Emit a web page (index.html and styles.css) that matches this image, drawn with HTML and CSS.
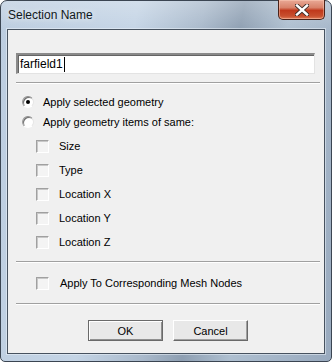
FILE: index.html
```html
<!DOCTYPE html>
<html lang="en">
<head>
    <meta charset="UTF-8">
    <title>Selection Name</title>
    <link rel="stylesheet" href="styles.css">
</head>
<body>
    <div class="window">
        <div class="titlebar">
            <span class="title">Selection Name</span>
            <button class="close" type="button">
                <svg width="14" height="12" viewBox="0 0 14 12">
                    <path d="M2 1.5 L12 10.5 M12 1.5 L2 10.5" stroke="#3a2a26" stroke-width="4.2" stroke-linecap="square" fill="none"/>
                    <path d="M2 1.5 L12 10.5 M12 1.5 L2 10.5" stroke="#ffffff" stroke-width="2.4" stroke-linecap="square" fill="none"/>
                </svg>
            </button>
        </div>

        <div class="client">
            <div class="field"><span class="value">farfield1</span><span class="caret"></span></div>

            <div class="sep"></div>

            <div class="options">
                <div class="row radio-row"><span class="radio checked"></span>Apply selected geometry</div>
                <div class="row radio-row"><span class="radio"></span>Apply geometry items of same:</div>
                <div class="checks">
                    <div class="row check-row"><span class="check"></span>Size</div>
                    <div class="row check-row"><span class="check"></span>Type</div>
                    <div class="row check-row"><span class="check"></span>Location X</div>
                    <div class="row check-row"><span class="check"></span>Location Y</div>
                    <div class="row check-row"><span class="check"></span>Location Z</div>
                </div>
            </div>

            <div class="sep sep-mid"></div>

            <div class="row check-row apply-row"><span class="check"></span>Apply To Corresponding Mesh Nodes</div>

            <div class="sep sep-low"></div>

            <div class="buttons">
                <button class="btn btn-default" type="button">OK</button>
                <button class="btn" type="button">Cancel</button>
            </div>
        </div>
    </div>
</body>
</html>
```

FILE: styles.css
```css
* {
    margin: 0;
    padding: 0;
    box-sizing: border-box;
}

body {
    width: 332px;
    height: 362px;
    overflow: hidden;
    background: #ffffff;
    font-family: "Liberation Sans", Arial, sans-serif;
    font-size: 11px;
    color: #000;
}

/* window frame */
.window {
    width: 332px;
    height: 362px;
    display: flex;
    flex-direction: column;
    border: 1px solid #3b4552;
    border-radius: 7px 7px 5px 5px;
    background:
        linear-gradient(to bottom, rgba(255, 255, 255, 0.25), rgba(255, 255, 255, 0) 30px),
        linear-gradient(100deg, #bccde0 0%, #c4d4e5 35%, #a9b9cb 52%, #8e9fb2 62%, #aebfd0 74%, #a3b4c7 88%, #98a9bd 100%);
}

.titlebar {
    height: 28px;
    flex: none;
    display: flex;
    justify-content: space-between;
    align-items: flex-start;
    padding-left: 7px;
    padding-right: 6px;
}

.title {
    margin-top: 7px;
    font-size: 12px;
    line-height: 14px;
    color: #101820;
    text-shadow: 0 0 6px rgba(255, 255, 255, 0.9);
}

.close {
    width: 47px;
    height: 20px;
    margin-top: -1px;
    display: flex;
    align-items: center;
    justify-content: center;
    border: 1px solid #4a2219;
    border-top: none;
    border-radius: 0 0 5px 5px;
    background: linear-gradient(to bottom, #e9a996 0%, #d8826a 40%, #c0391c 55%, #c8502f 85%, #e07c58 100%);
    box-shadow: inset 0 0 0 1px rgba(255, 210, 190, 0.45);
}

/* client area */
.client {
    flex: 1;
    margin: 0 6px 7px 6px;
    border: 1px solid #47525f;
    box-shadow: 0 0 0 1px rgba(235, 242, 249, 0.55);
    background: #f0f0f0;
    padding: 23px 4px 0 8px;
}

.field {
    width: 299px;
    height: 21px;
    display: flex;
    align-items: center;
    padding-left: 2px;
    background: #fff;
    border-top: 2px solid #8a8a8a;
    border-left: 2px solid #8a8a8a;
    border-right: 1px solid #e3e3e3;
    border-bottom: 1px solid #e3e3e3;
    box-shadow: inset 1px 1px 0 #646464;
    font-size: 12px;
}

.caret {
    width: 1px;
    height: 15px;
    margin-left: 1px;
    background: #000;
}

.sep {
    height: 2px;
    margin-top: 8px;
    border-top: 1px solid #a0a0a0;
    border-bottom: 1px solid #ffffff;
}

.sep-mid {
    margin-top: 7px;
}

.options {
    margin-top: 8px;
}

.row {
    display: flex;
    align-items: center;
}

.radio-row {
    height: 20px;
    padding-left: 6px;
}

.radio {
    width: 12px;
    height: 12px;
    margin-right: 9px;
    border-radius: 50%;
    border: 1px solid;
    border-color: #8c8c8c #e6e6e6 #ffffff #9c9c9c;
    background: radial-gradient(circle at 60% 60%, #ffffff 45%, #e8e8e8 100%);
    box-shadow: inset 1px 1px 0 #6e6e6e;
    display: flex;
    align-items: center;
    justify-content: center;
}

.radio.checked::after {
    content: "";
    width: 4px;
    height: 4px;
    border-radius: 50%;
    background: #000;
}

.checks {
    margin-top: 2px;
}

.check-row {
    height: 24px;
    padding-left: 20px;
}

.check {
    width: 13px;
    height: 13px;
    margin-right: 10px;
    background: #f4f4f4;
    border-top: 1px solid #a0a0a0;
    border-left: 1px solid #a0a0a0;
    border-right: 1px solid #ffffff;
    border-bottom: 1px solid #ffffff;
    box-shadow: inset 1px 1px 0 #c8c8c8;
}

.apply-row {
    margin-top: 8px;
}

.apply-row .check {
    margin-right: 11px;
}

.buttons {
    margin-top: 15px;
    padding-left: 72px;
    display: flex;
    gap: 10px;
}

.btn {
    width: 75px;
    height: 21px;
    font-family: "Liberation Sans", Arial, sans-serif;
    font-size: 11px;
    color: #000;
    background: #e8e8e8;
    border: 1px solid #8c8c8c;
    border-top-color: #ffffff;
    border-left-color: #ffffff;
    border-right-color: #696969;
    border-bottom-color: #696969;
    box-shadow: inset -1px -1px 0 #a0a0a0;
}

.btn-default {
    border: 1px solid #6a6a6a;
    box-shadow: inset 1px 1px 0 #ffffff, inset -1px -1px 0 #8f8f8f;
}
```
